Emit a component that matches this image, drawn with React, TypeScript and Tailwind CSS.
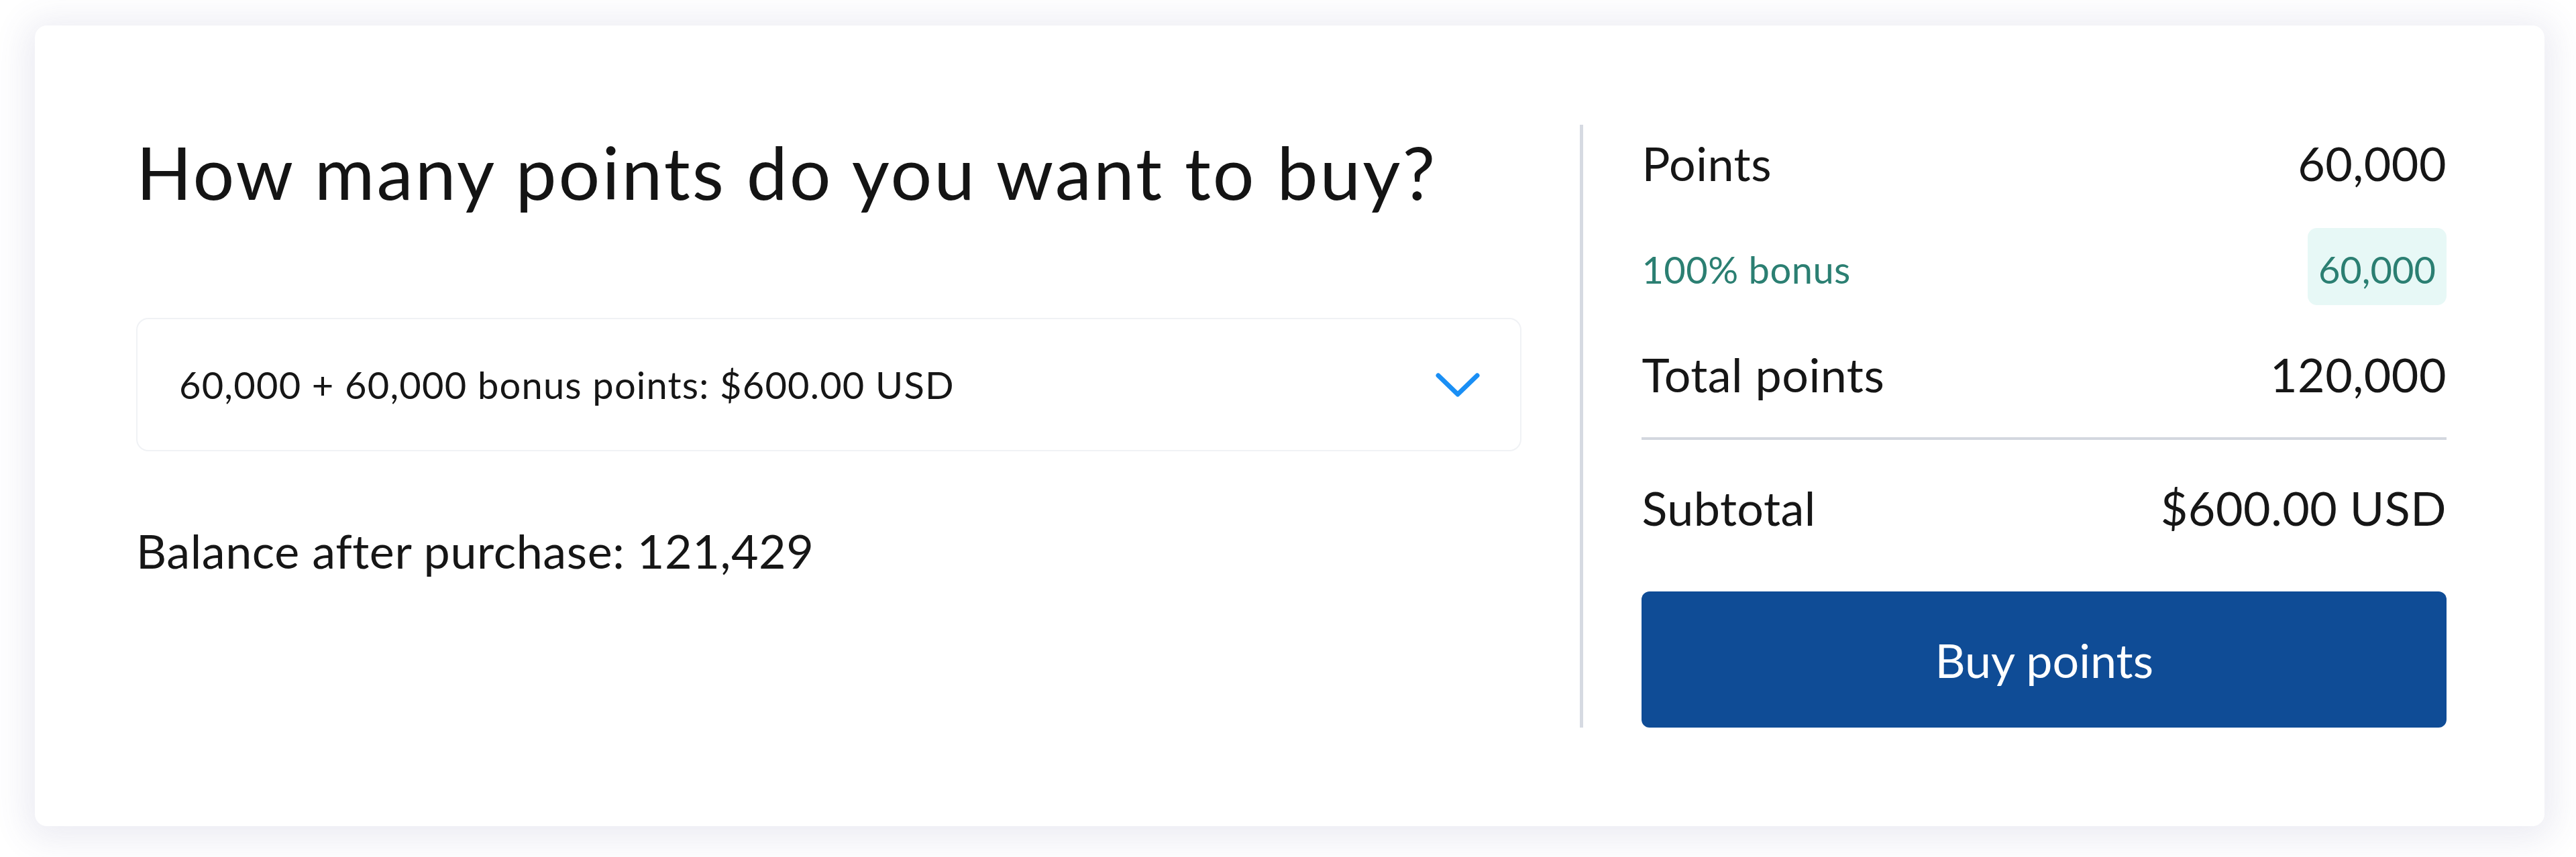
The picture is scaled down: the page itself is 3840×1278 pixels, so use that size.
import React, { useState } from "react";

type Option = {
  points: number;
  bonus: number;
  price: number;
};

const OPTIONS: Option[] = [
  { points: 60000, bonus: 60000, price: 600 },
];

const fmt = (n: number) => n.toLocaleString("en-US");

function Chevron() {
  return (
    <svg
      width="66"
      height="36"
      viewBox="0 0 66 36"
      fill="none"
      className="shrink-0"
    >
      <path
        d="M4 4 L33 32 L62 4"
        stroke="#1a8ff5"
        strokeWidth="7"
        strokeLinecap="round"
        strokeLinejoin="round"
      />
    </svg>
  );
}

function SummaryRow({ label, value }: { label: string; value: string }) {
  return (
    <div className="flex h-[114px] items-center justify-between text-[70px] leading-none tracking-[0.5px] text-[#161616]">
      <span>{label}</span>
      <span>{value}</span>
    </div>
  );
}

export default function App() {
  const [selected] = useState(0);
  const option = OPTIONS[selected];
  const balance = 1429 + option.points + option.bonus;

  return (
    <div
      className="min-h-[1278px] w-[3840px] bg-white pl-[52px] pr-[47px] pt-[38px] pb-[46px]"
      style={{ fontFamily: "Lato, 'Open Sans', sans-serif" }}
    >
      <div className="flex rounded-[18px] bg-white pl-[151px] pr-[146px] pt-[148px] pb-[147px] shadow-[0_6px_50px_14px_rgba(80,80,150,0.11)]">
        {/* picker */}
        <div className="flex w-[2066px] flex-col">
          <h1 className="mt-[15px] text-[109px] font-normal leading-none tracking-[3px] text-[#141414]">
            How many points do you want to buy?
          </h1>

          <button className="mt-[164px] flex h-[199px] w-full items-center justify-between rounded-[18px] border-2 border-[#f0f2f5] bg-white pl-[62px] pr-[60px] text-left">
            <span className="text-[56px] leading-none tracking-[1.2px] text-[#161616]">
              {fmt(option.points)} + {fmt(option.bonus)} bonus points: $
              {option.price.toFixed(2)} USD
            </span>
            <Chevron />
          </button>

          <p className="mt-[113px] text-[70px] leading-none tracking-[0.6px] text-[#161616]">
            Balance after purchase: {fmt(balance)}
          </p>
        </div>

        <div className="mx-[87px] w-[5px] bg-[#d6dae2]" />

        {/* order summary */}
        <div className="flex w-[1200px] flex-col">
          <SummaryRow label="Points" value={fmt(option.points)} />

          <div className="mt-[40px] flex h-[115px] items-center justify-between">
            <span className="pt-[8px] text-[56px] leading-none tracking-[0.5px] text-[#2b7f72]">
              100% bonus
            </span>
            <span className="flex h-full items-center rounded-[14px] bg-[#e7f8f6] px-[16px] pt-[8px] text-[56px] leading-none text-[#2b7f72]">
              {fmt(option.bonus)}
            </span>
          </div>

          <div className="mt-[46px]">
            <SummaryRow
              label="Total points"
              value={fmt(option.points + option.bonus)}
            />
          </div>

          <div className="mt-[37px] h-[4px] bg-[#d3d7df]" />

          <div className="mt-[44px]">
            <SummaryRow
              label="Subtotal"
              value={`$${option.price.toFixed(2)} USD`}
            />
          </div>

          <button className="mt-[68px] flex h-[203px] items-center justify-center rounded-[12px] bg-[#0f4c96] text-[70px] leading-none text-white">
            Buy points
          </button>
        </div>
      </div>
    </div>
  );
}
